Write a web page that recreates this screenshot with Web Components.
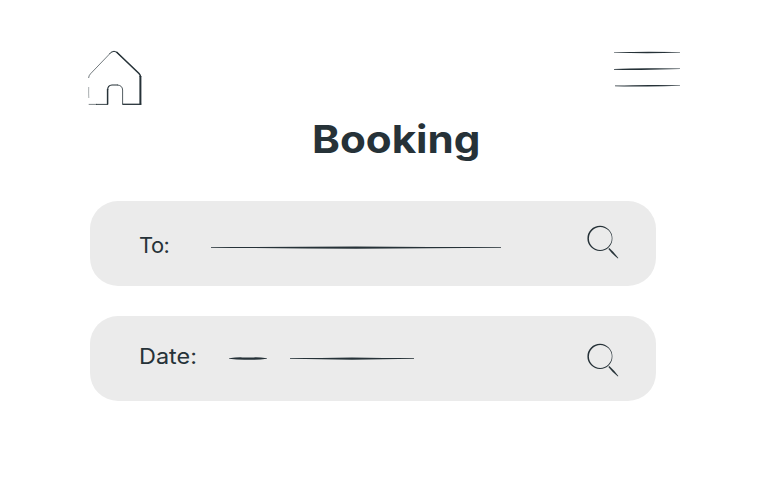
<!DOCTYPE html>
<html lang="en">
<head>
  <meta charset="UTF-8">
  <title>Booking</title>
  <style>
    body {
      margin: 0;
      background: #fff;
      color: #263238;
      font-family: Inter, "Liberation Sans", sans-serif;
    }
  </style>
</head>
<body>
  <booking-page>
    <house-icon slot="nav"></house-icon>
    <menu-icon slot="nav"></menu-icon>
    <page-title slot="title">Booking</page-title>
    <search-field style="--icon-top: 23px; --text-top: 31px; --line-top: 44px; --tracking: -0.5px; --stretch: 1.02">
      <span slot="label">To:</span>
      <ink-line length="290" style="margin-left: 120.5px"></ink-line>
    </search-field>
    <search-field style="--icon-top: 26px; --text-top: 26.5px; --line-top: 40px; --tracking: 0; --stretch: 1.09">
      <span slot="label">Date:</span>
      <ink-line length="38" bold style="margin-left: 138.5px"></ink-line>
      <ink-line length="124" style="margin-left: 23px"></ink-line>
    </search-field>
  </booking-page>

  <script>
    class BookingPage extends HTMLElement {
      constructor() {
        super();
        this.attachShadow({ mode: 'open' });
      }

      connectedCallback() {
        this.shadowRoot.innerHTML = `
          <style>
            :host {
              display: flex;
              flex-direction: column;
              box-sizing: border-box;
              width: 773px;
              height: 488px;
              padding-top: 50px;
              overflow: hidden;
            }

            header {
              display: flex;
              justify-content: space-between;
              height: 55px;
              padding: 0 93px 0 88px;
            }

            main {
              display: flex;
              flex-direction: column;
              gap: 29.7px;
              margin: 34.3px 117.2px 0 90.4px;
            }
          </style>
          <header><slot name="nav"></slot></header>
          <slot name="title"></slot>
          <main><slot></slot></main>
        `;
      }
    }

    class PageTitle extends HTMLElement {
      constructor() {
        super();
        this.attachShadow({ mode: 'open' });
      }

      connectedCallback() {
        this.shadowRoot.innerHTML = `
          <style>
            :host {
              display: block;
              height: 48px;
              margin: 14px 0 0 311.5px;
              font-size: 38px;
              font-weight: 700;
              line-height: 40px;
              white-space: nowrap;
              transform: scaleX(1.11);
              transform-origin: 0 0;
            }
          </style>
          <slot></slot>
        `;
      }
    }

    class SearchField extends HTMLElement {
      constructor() {
        super();
        this.attachShadow({ mode: 'open' });
      }

      connectedCallback() {
        this.shadowRoot.innerHTML = `
          <style>
            :host {
              display: grid;
              grid-template-columns: 1fr 69px;
              height: 85.2px;
              border-radius: 28px;
              background: #ebebeb;
            }

            .label, .value {
              grid-area: 1 / 1;
            }

            .label {
              justify-self: start;
              margin: var(--text-top) 0 0 48.8px;
              font-size: 21.5px;
              font-weight: 400;
              line-height: 26px;
              letter-spacing: var(--tracking);
              transform: scaleX(var(--stretch));
              transform-origin: 0 0;
            }

            .value {
              display: flex;
              padding-top: var(--line-top);
            }

            search-icon {
              margin-top: var(--icon-top);
            }
          </style>
          <div class="label"><slot name="label"></slot></div>
          <div class="value"><slot></slot></div>
          <search-icon></search-icon>
        `;
      }
    }

    // Horizontal stroke, thick in the middle and thin at both ends
    class InkLine extends HTMLElement {
      constructor() {
        super();
        this.attachShadow({ mode: 'open' });
      }

      connectedCallback() {
        const w = Number(this.getAttribute('length'));
        const path = this.hasAttribute('bold')
          ? `M0 2.3 Q${w * 0.2} 1.2 ${w * 0.35} 1.4 L${w * 0.5} 1.5 L${w * 0.65} 1.4 Q${w * 0.8} 1.2 ${w} 2.3 V2.7 Q${w * 0.8} 3.7 ${w * 0.6} 3.8 H${w * 0.4} Q${w * 0.2} 3.7 0 2.7Z`
          : `M0 2.1 Q${w * 0.25} 2 ${w / 2} 1.5 Q${w * 0.75} 2 ${w} 2.1 V2.7 Q${w * 0.75} 3.1 ${w / 2} 3.8 Q${w * 0.25} 3.1 0 2.7Z`;

        this.shadowRoot.innerHTML = `
          <style>
            :host { display: block; flex: none; }
            svg { display: block; }
          </style>
          <svg width="${w}" height="5" viewBox="0 0 ${w} 5" fill="#263238"><path d="${path}"/></svg>
        `;
      }
    }

    class HouseIcon extends HTMLElement {
      constructor() {
        super();
        this.attachShadow({ mode: 'open' });
      }

      connectedCallback() {
        this.shadowRoot.innerHTML = `
          <style>
            :host { display: block; }
            svg { display: block; }
          </style>
          <svg width="55" height="56" viewBox="0 0 55 56" fill="none" stroke="#263238" stroke-linejoin="round">
            <path stroke-width=".4" d="M.8 48 Q.5 44 .7 37"/>
            <path stroke-width=".65" d="M.6 28 Q.8 25.5 2.5 23.8 L22 3.5"/>
            <path stroke-width="1" d="M21.5 4 L23 2.3 Q26 .2 29 2.3 L34 7"/>
            <path stroke-width="1.6" d="M28.5 2 L51 23.5 Q52.5 25 52.5 27"/>
            <path stroke-width="2" d="M52.4 26 V54.6"/>
            <path stroke-width="1.3" d="M53.3 54.3 H34.5"/>
            <path stroke-width=".8" d="M34.6 54.5 V40 Q34.5 35.5 29.5 35"/>
            <path stroke-width="1.2" d="M30 35 H24 Q19.7 35.3 19.6 40"/>
            <path stroke-width="1.5" d="M19.6 39 V54.5"/>
            <path stroke-width=".9" d="M20 54.4 H8"/>
            <path stroke-width=".6" d="M9 54.4 H.7"/>
          </svg>
        `;
      }
    }

    class MenuIcon extends HTMLElement {
      constructor() {
        super();
        this.attachShadow({ mode: 'open' });
      }

      connectedCallback() {
        this.shadowRoot.innerHTML = `
          <style>
            :host { display: block; }
            svg { display: block; }
          </style>
          <svg width="66" height="40" viewBox="0 0 66 40" fill="#263238">
            <path d="M0 2.1 Q20 1.8 35 1.7 Q55 1.7 66 2.1 V2.6 Q50 3.2 33 3.3 Q15 3.1 0 2.6Z"/>
            <path d="M0 18.9 Q15 18.4 33 18.2 Q50 18 66 18.6 V19.1 Q45 19.8 27 20 Q12 20.2 0 19.7Z"/>
            <path d="M1 35.6 Q20 34.9 35 34.9 Q55 34.8 66 35.2 V35.7 Q50 36.2 33 36.4 Q15 36.7 1 36.2Z"/>
          </svg>
        `;
      }
    }

    class SearchIcon extends HTMLElement {
      constructor() {
        super();
        this.attachShadow({ mode: 'open' });
      }

      connectedCallback() {
        this.shadowRoot.innerHTML = `
          <style>
            :host { display: block; }
            svg { display: block; }
          </style>
          <svg width="34" height="36" viewBox="0 0 34 36" fill="#263238">
            <path fill-rule="evenodd" d="M13 1.8 A12.6 12.6 0 0 1 25.4 14.3 A12.4 12.4 0 0 1 13 27 A12.5 12.5 0 0 1 .4 14.5 A12.6 12.6 0 0 1 13 1.8Z M13.3 2.9 A11.7 11.6 0 0 0 1.9 14.5 A11.7 11.5 0 0 0 13.2 25.9 A11.8 11.7 0 0 0 24.8 14.3 A11.7 11.5 0 0 0 13.3 2.9Z"/>
            <path d="M21.4 24.9 L22.3 24.1 Q27 28.3 31.3 34.1 L30.9 34.5 Q26 30.8 21.4 24.9Z"/>
          </svg>
        `;
      }
    }

    customElements.define('booking-page', BookingPage);
    customElements.define('page-title', PageTitle);
    customElements.define('search-field', SearchField);
    customElements.define('ink-line', InkLine);
    customElements.define('house-icon', HouseIcon);
    customElements.define('menu-icon', MenuIcon);
    customElements.define('search-icon', SearchIcon);
  </script>
</body>
</html>
